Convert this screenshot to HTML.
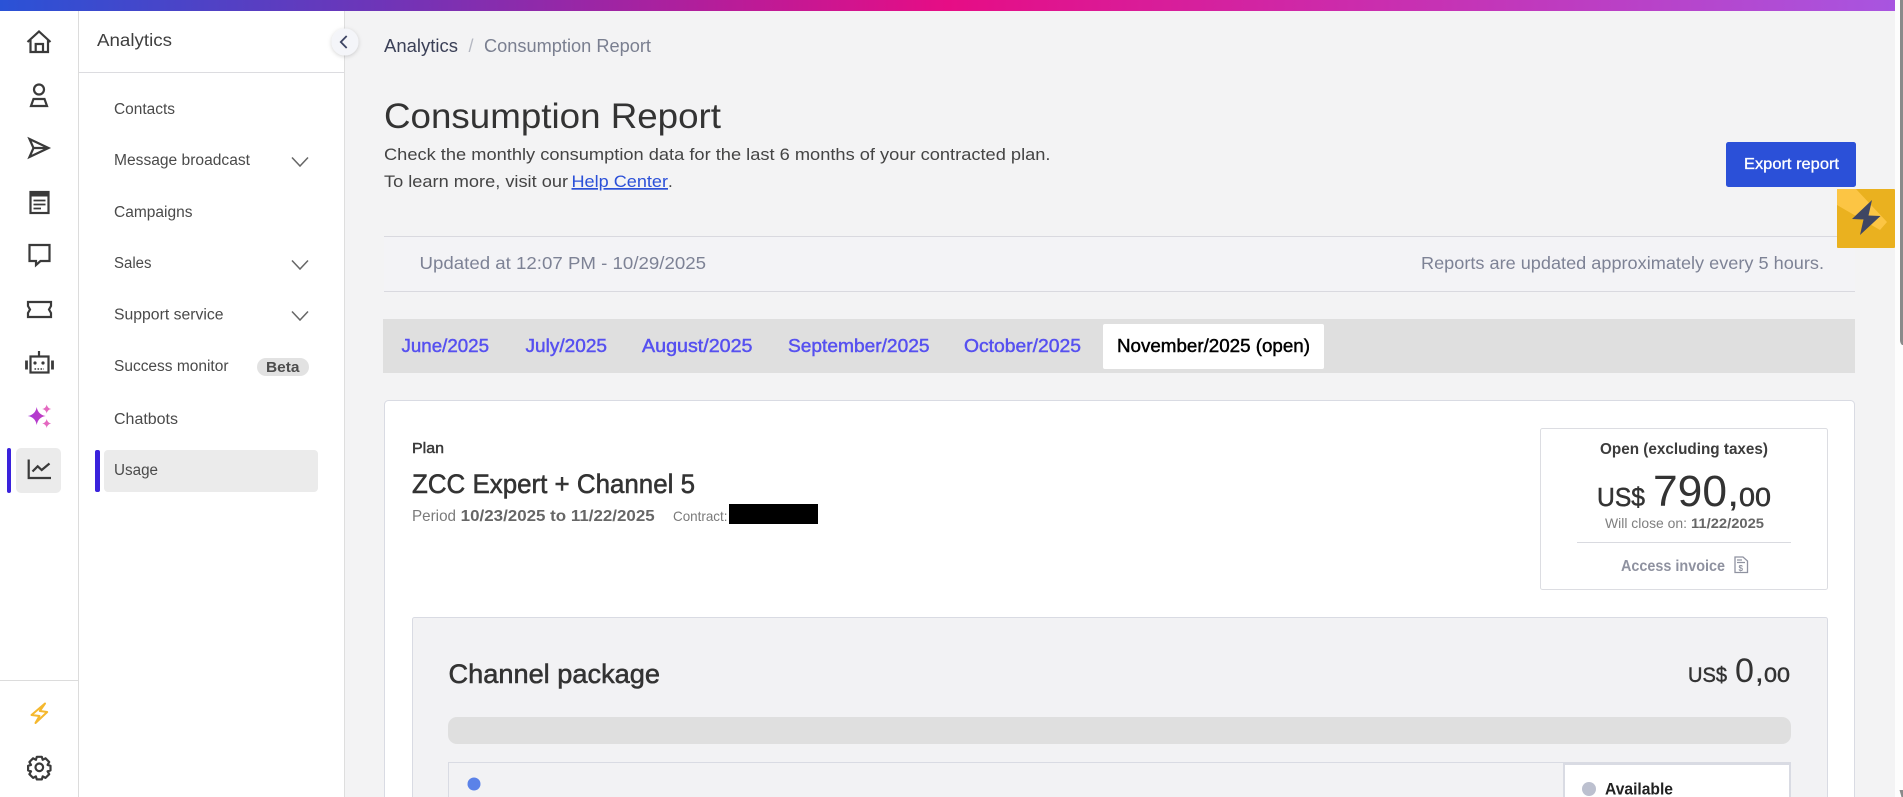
<!DOCTYPE html>
<html lang="en">
<head>
<meta charset="utf-8">
<title>Consumption Report</title>
<style>
html,body{margin:0;padding:0;width:1903px;height:797px;overflow:hidden;background:#f3f3f4}
svg{display:block;position:absolute;left:0;top:0}
text{font-family:"Liberation Sans",Arial,sans-serif;white-space:pre}
.nav{font-size:15.5px;fill:#4a4a4a}
.ic{fill:none;stroke:#3a3a3a;stroke-width:2.2}
.tab{font-size:18px;font-weight:500;fill:#5650f0;stroke:#5650f0;stroke-width:.45}
</style>
</head>
<body>
<svg width="1903" height="797" viewBox="0 0 1903 797" xmlns="http://www.w3.org/2000/svg">
<defs>
<linearGradient id="top" x1="0" x2="1" y1="0" y2="0">
<stop offset="0" stop-color="#2a52d6"/>
<stop offset=".2" stop-color="#6e35b8"/>
<stop offset=".5" stop-color="#e60d85"/>
<stop offset="1" stop-color="#a855e0"/>
</linearGradient>
<linearGradient id="star" x1="0" x2="1" y1="0" y2="0">
<stop offset="0" stop-color="#a93ad8"/>
<stop offset="1" stop-color="#c23cc0"/>
</linearGradient>
<filter id="sh" x="-30%" y="-30%" width="160%" height="160%"><feDropShadow dx="0" dy="1" stdDeviation="2" flood-color="#000" flood-opacity=".18"/></filter>
</defs>

<!-- page -->
<rect width="1903" height="797" fill="#f3f3f4"/>

<!-- icon rail -->
<rect x="0" y="0" width="78" height="797" fill="#fff"/>
<rect x="78" y="0" width="1" height="797" fill="#dcdcdc"/>
<!-- secondary nav -->
<rect x="79" y="0" width="265" height="797" fill="#fff"/>
<rect x="344" y="0" width="1" height="797" fill="#dedede"/>
<rect x="79" y="72" width="265" height="1" fill="#dcdce0"/>
<rect x="0" y="680" width="78" height="1" fill="#dcdcdc"/>

<!-- rail icons -->
<g class="ic" stroke-linejoin="miter">
<path d="M27.5 42 L39 31.5 L50.5 42 M30.5 40 V52 H48 V40 M35.7 52 V44 H43 V52"/>
<circle cx="39" cy="89.5" r="5"/>
<path d="M33.5 99 H44.5 L47 106 H31 Z"/>
<path d="M29.5 139 L48.5 148 L29.5 157 L33.5 148 Z M33.5 148 H48"/>
<rect x="30.5" y="192" width="18" height="21"/>
<path d="M33.5 200.5 H45.5 M33.5 204.5 H45.5 M33.5 208.5 H41" stroke-width="1.8"/>
<path d="M29.5 245 H49.5 V261 H40.5 L36 265 V261 H29.5 Z"/>
<path d="M28 302 H51 V306 L49 309.5 L51 313 V317 H28 V313 L30 309.5 L28 306 Z"/>
<rect x="30.5" y="356.5" width="18" height="16"/>
<path d="M39 351 V356" />
<path d="M26.5 360.5 V369.5 M52.5 360.5 V369.5" stroke-width="2.8"/>
<path d="M34.5 369 H44" stroke-dasharray="1.6 1.4" stroke-width="1.6"/>
</g>
<rect x="30" y="191" width="19" height="5.5" fill="#3a3a3a"/>
<circle cx="35" cy="363" r="1.6" fill="#3a3a3a"/><circle cx="43" cy="363" r="1.6" fill="#3a3a3a"/>
<path d="M36.7 407 Q38 414.7 45.7 416 Q38 417.3 36.7 425 Q35.4 417.3 27.7 416 Q35.4 414.7 36.7 407 Z" fill="url(#star)"/>
<path d="M46.7 404.5 Q47.4 408.3 51.2 409 Q47.4 409.7 46.7 413.5 Q46 409.7 42.2 409 Q46 408.3 46.7 404.5 Z" fill="#e468c0"/>
<path d="M46.7 419 Q47.4 422.8 51.2 423.5 Q47.4 424.2 46.7 428 Q46 424.2 42.2 423.5 Q46 422.8 46.7 419 Z" fill="#e468c0"/>

<rect x="16" y="448" width="45" height="45" rx="5" fill="#ebebeb"/>
<rect x="7" y="448" width="4" height="45" rx="2" fill="#3a22dc"/>
<path class="ic" d="M28.7 459.5 V478 H51 M32.5 471.5 L37.7 466.3 L41.7 470 L49.5 463.5"/>

<path d="M45 703.5 L31.5 715 L39.5 716 L35.5 723 L47.2 712 L39.8 711 Z" fill="none" stroke="#f5b82e" stroke-width="2" stroke-linejoin="round"/>
<g class="ic">
<circle cx="39.3" cy="767.3" r="3.8"/>
<path d="M36.8 756.8 H41.8 L42.7 759.8 L45.5 758.3 L49.2 762 L47.6 764.9 L50.5 765.8 V770.4 L47.6 771.3 L49.2 774.2 L45.5 777.9 L42.7 776.4 L41.8 779.4 H36.8 L35.9 776.4 L33.1 777.9 L29.4 774.2 L31 771.3 L28.1 770.4 V765.8 L31 764.9 L29.4 762 L33.1 758.3 L35.9 759.8 Z" stroke-linejoin="round"/>
</g>

<!-- top gradient -->
<rect x="0" y="0" width="1895" height="11" fill="url(#top)"/>

<!-- nav text -->
<text x="97" y="46" font-size="17.5" fill="#3f3f3f" textLength="75" lengthAdjust="spacingAndGlyphs">Analytics</text>
<text class="nav" x="114" y="114" textLength="61" lengthAdjust="spacingAndGlyphs">Contacts</text>
<text class="nav" x="114" y="165" textLength="136" lengthAdjust="spacingAndGlyphs">Message broadcast</text>
<text class="nav" x="114" y="217" textLength="78.5" lengthAdjust="spacingAndGlyphs">Campaigns</text>
<text class="nav" x="114" y="268" textLength="37.5" lengthAdjust="spacingAndGlyphs">Sales</text>
<text class="nav" x="114" y="319.5" textLength="109.5" lengthAdjust="spacingAndGlyphs">Support service</text>
<text class="nav" x="114" y="371" textLength="114.5" lengthAdjust="spacingAndGlyphs">Success monitor</text>
<text class="nav" x="114" y="424" textLength="64" lengthAdjust="spacingAndGlyphs">Chatbots</text>
<rect x="104" y="450" width="214" height="42" rx="4" fill="#ebebeb"/>
<rect x="95" y="450" width="5" height="42" rx="2" fill="#3a22dc"/>
<text class="nav" x="114" y="475" textLength="44" lengthAdjust="spacingAndGlyphs">Usage</text>
<g fill="none" stroke="#666" stroke-width="1.5">
<path d="M292 157.5 L300 166 L308 157.5"/>
<path d="M292 260.5 L300 269 L308 260.5"/>
<path d="M292 311.5 L300 320 L308 311.5"/>
</g>
<rect x="257" y="358" width="52" height="18" rx="9" fill="#e2e2e2"/>
<text x="266" y="372" font-size="15" font-weight="700" fill="#4d4d4d" textLength="33.5" lengthAdjust="spacingAndGlyphs">Beta</text>

<!-- collapse button -->
<circle cx="345" cy="42" r="13.5" fill="#f4f5f9" filter="url(#sh)"/>
<path d="M346.7 36 L340.8 42 L346.7 48" fill="none" stroke="#3d4463" stroke-width="1.8"/>

<!-- breadcrumb -->
<text x="384" y="52" font-size="18" fill="#3b4057" textLength="74" lengthAdjust="spacingAndGlyphs">Analytics</text>
<text x="468.5" y="52" font-size="18" fill="#b5b8c2">/</text>
<text x="484" y="52" font-size="18" fill="#7a7f90" textLength="167" lengthAdjust="spacingAndGlyphs">Consumption Report</text>

<!-- heading -->
<text x="384" y="128" font-size="35" fill="#333" textLength="337" lengthAdjust="spacingAndGlyphs">Consumption Report</text>
<text x="384" y="160" font-size="17" fill="#444" textLength="666.5" lengthAdjust="spacingAndGlyphs">Check the monthly consumption data for the last 6 months of your contracted plan.</text>
<text x="384" y="187" font-size="17" fill="#444" textLength="184" lengthAdjust="spacingAndGlyphs">To learn more, visit our</text>
<text x="571.5" y="187" font-size="17" fill="#2b50d8" text-decoration="underline" textLength="96.5" lengthAdjust="spacingAndGlyphs">Help Center</text>
<text x="668" y="187" font-size="17" fill="#444">.</text>

<!-- export -->
<rect x="1726" y="142" width="130" height="45" rx="2.5" fill="#2b50d8"/>
<text x="1744" y="169" font-size="16" fill="#fff" stroke="#fff" stroke-width=".3" textLength="95" lengthAdjust="spacingAndGlyphs">Export report</text>

<!-- update strip -->
<rect x="384" y="236" width="1471" height="55" fill="#f3f3f6"/>
<rect x="384" y="236" width="1471" height="1" fill="#d9d9df"/>
<rect x="384" y="291" width="1471" height="1" fill="#d9d9df"/>
<text x="419.5" y="269" font-size="17.5" fill="#7d8295" textLength="286.5" lengthAdjust="spacingAndGlyphs">Updated at 12:07 PM - 10/29/2025</text>
<text x="1421" y="269" font-size="17.5" fill="#7d8295" textLength="403" lengthAdjust="spacingAndGlyphs">Reports are updated approximately every 5 hours.</text>

<!-- gold tab -->
<rect x="1837" y="189" width="58" height="59" rx="1" fill="#eab11f"/>
<path d="M1837 189 H1856 L1887 222 L1880 230 L1837 205 Z" fill="#fcc544"/>
<path d="M1872 200 L1852 219 L1863.5 219.5 L1860 235 L1880.5 216 L1868.5 215.5 Z" fill="#3f4663"/>

<!-- tabs -->
<rect x="383" y="319" width="1472" height="54" fill="#dfdfdf"/>
<rect x="1103" y="324" width="221" height="45" rx="2" fill="#fff"/>
<text class="tab" x="401.5" y="352" textLength="87.5" lengthAdjust="spacingAndGlyphs">June/2025</text>
<text class="tab" x="525.5" y="352" textLength="81.5" lengthAdjust="spacingAndGlyphs">July/2025</text>
<text class="tab" x="642" y="352" textLength="110.5" lengthAdjust="spacingAndGlyphs">August/2025</text>
<text class="tab" x="788" y="352" textLength="141.5" lengthAdjust="spacingAndGlyphs">September/2025</text>
<text class="tab" x="964" y="352" textLength="117" lengthAdjust="spacingAndGlyphs">October/2025</text>
<text class="tab" x="1117" y="352" textLength="193" lengthAdjust="spacingAndGlyphs" style="fill:#000;stroke:#000">November/2025 (open)</text>

<!-- main card -->
<rect x="384.5" y="400.5" width="1470" height="420" rx="4" fill="#fff" stroke="#d9dbe3"/>
<text x="412" y="453" font-size="15" fill="#3a3a3a" stroke="#3a3a3a" stroke-width=".45" textLength="32" lengthAdjust="spacingAndGlyphs">Plan</text>
<text x="412" y="493" font-size="27" fill="#333" stroke="#333" stroke-width=".55" textLength="283" lengthAdjust="spacingAndGlyphs">ZCC Expert + Channel 5</text>
<text x="412" y="521" font-size="16" fill="#7a7a7a" textLength="44" lengthAdjust="spacingAndGlyphs">Period</text>
<text x="460.7" y="521" font-size="16" font-weight="700" fill="#666" textLength="194" lengthAdjust="spacingAndGlyphs">10/23/2025 to 11/22/2025</text>
<text x="673" y="521" font-size="14" fill="#7a7a7a" textLength="54.5" lengthAdjust="spacingAndGlyphs">Contract:</text>
<rect x="729" y="504" width="89" height="20" fill="#000"/>

<!-- invoice box -->
<rect x="1540.5" y="428.5" width="287" height="161" rx="2" fill="#fff" stroke="#dcdde2"/>
<text x="1600" y="454" font-size="16" font-weight="700" fill="#3c3c3c" textLength="168" lengthAdjust="spacingAndGlyphs">Open (excluding taxes)</text>
<text x="1597" y="506" font-size="26" fill="#333" stroke="#333" stroke-width=".5" textLength="48" lengthAdjust="spacingAndGlyphs">US$</text>
<text x="1653" y="506" font-size="44" fill="#333" textLength="74" lengthAdjust="spacingAndGlyphs">790</text>
<text x="1729" y="506" font-size="30" fill="#333" font-weight="700">,</text>
<text x="1739" y="506" font-size="26" fill="#333" stroke="#333" stroke-width=".5" textLength="32" lengthAdjust="spacingAndGlyphs">00</text>
<text x="1605" y="528" font-size="14" fill="#7f7f7f" textLength="82" lengthAdjust="spacingAndGlyphs">Will close on:</text>
<text x="1691" y="528" font-size="14" font-weight="700" fill="#666" textLength="73" lengthAdjust="spacingAndGlyphs">11/22/2025</text>
<rect x="1577" y="542" width="214" height="1" fill="#d9dae0"/>
<text x="1621" y="571" font-size="16" font-weight="700" fill="#8f92a0" textLength="104" lengthAdjust="spacingAndGlyphs">Access invoice</text>
<path d="M1735 557 H1743 L1747.5 561 V572.5 H1735 Z M1737 560 H1742 M1737 562.5 H1745" fill="none" stroke="#8f92a0" stroke-width="1.3"/>
<text x="1738.5" y="571" font-size="8" font-weight="700" fill="#8f92a0">$</text>

<!-- channel package -->
<rect x="412.5" y="617.5" width="1415" height="200" rx="2" fill="#f2f2f4" stroke="#d9dbe3"/>
<text x="448.5" y="683" font-size="27" fill="#333" stroke="#333" stroke-width=".55" textLength="211.5" lengthAdjust="spacingAndGlyphs">Channel package</text>
<text x="1688" y="682" font-size="21" fill="#333" stroke="#333" stroke-width=".45" textLength="39" lengthAdjust="spacingAndGlyphs">US$</text>
<text x="1735" y="682" font-size="34" fill="#333" textLength="19" lengthAdjust="spacingAndGlyphs">0</text>
<text x="1756" y="682" font-size="24" fill="#333" font-weight="700">,</text>
<text x="1764" y="682" font-size="21" fill="#333" stroke="#333" stroke-width=".45" textLength="26" lengthAdjust="spacingAndGlyphs">00</text>
<rect x="448" y="717" width="1343" height="27" rx="9" fill="#dfdfdf"/>
<rect x="448.5" y="762.5" width="1342" height="60" fill="#f2f2f4" stroke="#d9dbe3"/>
<circle cx="474" cy="784" r="6.5" fill="#5b82e8"/>
<rect x="1564" y="763" width="226" height="60" fill="#fff"/>
<path d="M1564 764 H1790 M1564 763 V800 M1790 763 V800" stroke="#d9dbe3" stroke-width="2" fill="none"/>
<circle cx="1589" cy="789" r="7" fill="#bcc0cf"/>
<text x="1605" y="794.5" font-size="16.5" font-weight="700" fill="#222" textLength="68" lengthAdjust="spacingAndGlyphs">Available</text>

<!-- scrollbar -->
<rect x="1895" y="0" width="8" height="797" fill="#fdfdfd"/>
<path d="M1900 0 H1903 V345 H1902 Q1900 343 1900 340 Z" fill="#8a8a8a"/>
<path d="M1899.5 790 H1903 V797 H1901.5 Z" fill="#8a8a8a"/>
</svg>
</body>
</html>
